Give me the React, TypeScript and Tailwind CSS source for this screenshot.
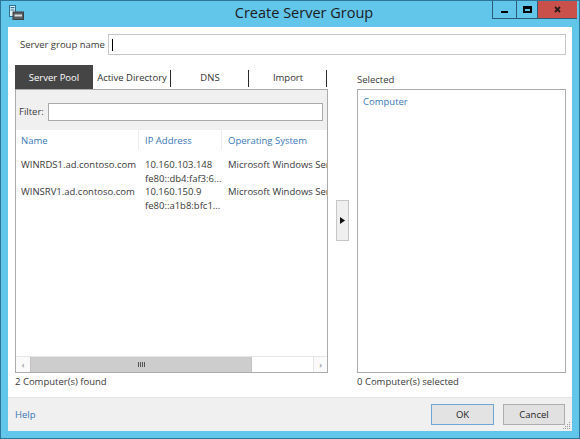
import React from "react";

function TitleIcon() {
  return (
    <svg width="15" height="15" viewBox="0 0 15 15">
      <rect x="0.5" y="0.5" width="6" height="11" fill="#dff3fb" stroke="#2f6f8e" />
      <rect x="1.5" y="2" width="4" height="1.2" fill="#2f6f8e" />
      <rect x="1.5" y="4.5" width="4" height="1" fill="#2f6f8e" />
      <rect x="4" y="7" width="10.5" height="7.5" fill="#5a5f63" stroke="#3b3f42" strokeWidth="1" />
      <rect x="5.5" y="9.5" width="7.5" height="2" fill="#d8dde0" />
    </svg>
  );
}

function Tab({ label, active, sep }: { label: string; active?: boolean; sep?: boolean }) {
  return (
    <div
      className={
        "relative w-[78px] h-[24px] flex items-center justify-center pt-[3px] text-[9.5px] whitespace-nowrap " +
        (active ? "bg-[#454545] text-white" : "text-[#333]")
      }
    >
      {label}
      {sep && <div className="absolute right-0 top-[5px] w-px h-[17px] bg-[#2b2b2b]" />}
    </div>
  );
}

export default function App() {
  return (
    <div className="w-[580px] h-[439px] flex flex-col bg-[#62c5ea] border border-[#2e7699] font-['Open_Sans',sans-serif] text-[#3a3a3a] overflow-hidden">
      {/* title bar */}
      <div className="h-[26px] flex items-start shrink-0">
        <div className="mt-[4px] ml-[8px] w-[15px] h-[15px]">
          <TitleIcon />
        </div>
        <div className="flex-1 h-full flex items-center justify-center pl-[92px] text-[14.5px] text-[#1b1b1b] leading-none pb-[1px]">
          Create Server Group
        </div>
        <div className="flex h-[18px] mr-[2px] border-l border-b border-[#2a5d75]">
          <div className="w-[24px] border-r border-[#2a5d75] flex items-center justify-center">
            <div className="w-[7px] h-[2px] bg-black mt-[4px]" />
          </div>
          <div className="w-[21px] border-r border-[#2a5d75] flex items-center justify-center">
            <div className="w-[9px] h-[7px] border-[2px] border-t-[3px] border-black" />
          </div>
          <div className="w-[39px] bg-[#c9504b] flex items-center justify-center">
            <svg width="7" height="7" viewBox="0 0 7 7">
              <path d="M1 1 L6 6 M6 1 L1 6" stroke="#2b1a1a" strokeWidth="1.8" />
            </svg>
          </div>
        </div>
      </div>

      {/* content */}
      <div className="flex-1 mx-[7px] mb-[7px] bg-white flex flex-col min-h-0">
        <div className="flex-1 flex flex-col">
          <div className="flex items-center h-[21px] mt-[7px]">
            <span className="w-[100px] pl-[12px] pt-[1px] text-[9.5px] whitespace-nowrap">Server group name</span>
            <div className="w-[458px] h-[21px] border border-[#c8c8c8] flex items-center pl-[3px]">
              <div className="w-px h-[12px] bg-black" />
            </div>
          </div>

          <div className="flex mt-[10px]">
            {/* left column */}
            <div className="ml-[7px] w-[313px] flex flex-col">
              <div className="flex h-[24px]">
                <Tab label="Server Pool" active />
                <Tab label="Active Directory" sep />
                <Tab label="DNS" sep />
                <Tab label="Import" sep />
              </div>
              <div className="h-[284px] border border-[#ababab] flex flex-col">
                <div className="h-[40px] bg-[#f0f0f0] flex items-start pt-[13px] pl-[3px]">
                  <span className="w-[29px] h-[18px] flex items-center pt-[1px] text-[9.5px]">Filter:</span>
                  <div className="w-[275px] h-[18px] bg-white border border-[#a9a9a9]" />
                </div>
                <div className="grid grid-cols-[123px_83px_1fr] h-[20px] text-[9.5px] text-[#3a78b8]">
                  <div className="pl-[5px] pt-[2px] flex items-center border-r border-[#efefef]">Name</div>
                  <div className="pl-[6px] pt-[2px] flex items-center border-r border-[#efefef]">IP Address</div>
                  <div className="pl-[6px] pt-[2px] flex items-center whitespace-nowrap overflow-hidden">Operating System</div>
                </div>
                <div className="mt-[8px] text-[9.5px] leading-[13.5px]">
                  <div className="grid grid-cols-[123px_83px_1fr] h-[27px]">
                    <div className="pl-[5px] whitespace-nowrap">WINRDS1.ad.contoso.com</div>
                    <div className="pl-[6px] whitespace-nowrap overflow-hidden">
                      <div>10.160.103.148</div>
                      <div>fe80::db4:faf3:6...</div>
                    </div>
                    <div className="pl-[6px] whitespace-nowrap overflow-hidden">Microsoft Windows Server</div>
                  </div>
                  <div className="grid grid-cols-[123px_83px_1fr] h-[27px]">
                    <div className="pl-[5px] whitespace-nowrap">WINSRV1.ad.contoso.com</div>
                    <div className="pl-[6px] whitespace-nowrap overflow-hidden">
                      <div>10.160.150.9</div>
                      <div>fe80::a1b8:bfc1...</div>
                    </div>
                    <div className="pl-[6px] whitespace-nowrap overflow-hidden">Microsoft Windows Server</div>
                  </div>
                </div>
                <div className="flex-1" />
                <div className="h-[16px] flex border-t border-[#e6e6e6] bg-[#fafafa]">
                  <div className="w-[14px] flex items-center justify-center text-[9px] text-[#777]">‹</div>
                  <div className="w-[222px] bg-[#cdcdcd] border-x border-[#c2c2c2] flex items-center justify-center gap-[1px]">
                    <div className="w-px h-[5px] bg-[#555]" />
                    <div className="w-px h-[5px] bg-[#555]" />
                    <div className="w-px h-[5px] bg-[#555]" />
                    <div className="w-px h-[5px] bg-[#555]" />
                  </div>
                  <div className="flex-1 bg-white" />
                  <div className="w-[14px] flex items-center justify-center text-[9px] text-[#777] border-l border-[#e6e6e6]">›</div>
                </div>
              </div>
              <div className="mt-[2px] leading-[14px] text-[9.5px]">2 Computer(s) found</div>
            </div>

            {/* arrow */}
            <div className="ml-[8px] mt-[135px] w-[13px] h-[41px] bg-[#efefef] border border-[#c6c6c6] flex items-center justify-center self-start">
              <svg width="5" height="7" viewBox="0 0 5 7">
                <path d="M0 0 L5 3.5 L0 7 Z" fill="#111" />
              </svg>
            </div>

            {/* right column */}
            <div className="ml-[8px] w-[209px] flex flex-col">
              <div className="h-[24px] pt-[8px] leading-[14px] text-[9.5px]">Selected</div>
              <div className="h-[284px] border border-[#ababab] pl-[5px] pt-[5px] text-[9.5px] text-[#3a78b8] leading-[14px]">
                Computer
              </div>
              <div className="mt-[2px] leading-[14px] text-[9.5px]">0 Computer(s) selected</div>
            </div>
          </div>
        </div>

        {/* footer */}
        <div className="relative h-[34px] bg-[#f0f0f0] border-t border-[#e2e2e2] flex items-center px-[7px]">
          <span className="text-[#3a76b6] pt-[1px] text-[9.5px]">Help</span>
          <div className="flex-1" />
          <div className="w-[63px] h-[21px] border border-[#6ea6d8] bg-[#e3e3e3] flex items-center justify-center pt-[1px] text-[9.5px] text-[#222]">
            OK
          </div>
          <div className="ml-[9px] w-[62px] h-[21px] border border-[#adadad] bg-[#e1e1e1] flex items-center justify-center pt-[1px] text-[9.5px] text-[#222]">
            Cancel
          </div>
          <svg className="absolute right-[1px] bottom-[1px]" width="8" height="8" viewBox="0 0 8 8">
            <rect x="6" y="0" width="1" height="1" fill="#999" />
            <rect x="4" y="2" width="1" height="1" fill="#999" />
            <rect x="6" y="2" width="1" height="1" fill="#999" />
            <rect x="2" y="4" width="1" height="1" fill="#999" />
            <rect x="4" y="4" width="1" height="1" fill="#999" />
            <rect x="6" y="4" width="1" height="1" fill="#999" />
            <rect x="0" y="6" width="1" height="1" fill="#999" />
            <rect x="2" y="6" width="1" height="1" fill="#999" />
            <rect x="4" y="6" width="1" height="1" fill="#999" />
            <rect x="6" y="6" width="1" height="1" fill="#999" />
          </svg>
        </div>
      </div>
    </div>
  );
}
